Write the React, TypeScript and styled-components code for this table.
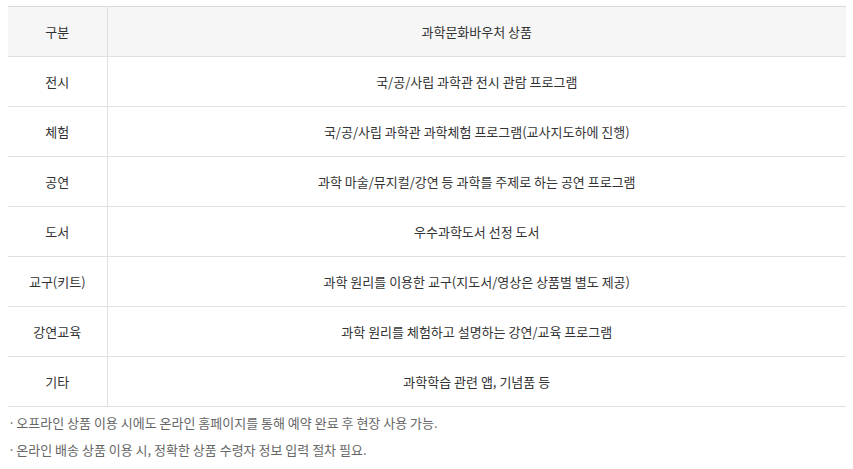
import styled, { createGlobalStyle } from "styled-components";

const GlobalStyle = createGlobalStyle`
  html, body {
    margin: 0;
    padding: 0;
    background: #fff;
  }
  body {
    font-family: "Noto Sans CJK KR", "Noto Sans", sans-serif;
    color: #333;
  }
`;

const Wrapper = styled.div`
  padding: 6px 7px 0 8px;
`;

const Table = styled.table`
  width: 100%;
  border-collapse: collapse;
  table-layout: fixed;
  border-top: 1px solid #d9d9d9;
  font-size: 13px;
  color: #333;
`;

const HeadCell = styled.th<{ $first?: boolean }>`
  height: 49px;
  padding: 0;
  font-weight: 400;
  background-color: #f6f6f6;
  border-bottom: 1px solid #e0e0e0;
  border-left: ${(props) => (props.$first ? "none" : "1px solid #e0e0e0")};
  text-align: center;
  vertical-align: middle;
`;

const Cell = styled.td<{ $first?: boolean }>`
  height: 49px;
  padding: 0;
  border-bottom: 1px solid #e0e0e0;
  border-left: ${(props) => (props.$first ? "none" : "1px solid #e0e0e0")};
  text-align: center;
  vertical-align: middle;
`;

const NoteList = styled.ul`
  list-style: none;
  margin: 2px 0 0;
  padding: 0;
`;

const Note = styled.li`
  font-size: 13px;
  line-height: 27px;
  color: #666;

  &::before {
    content: "·";
    margin-right: 1px;
  }
`;

const rows = [
  { type: "전시", product: "국/공/사립 과학관 전시 관람 프로그램" },
  { type: "체험", product: "국/공/사립 과학관 과학체험 프로그램(교사지도하에 진행)" },
  { type: "공연", product: "과학 마술/뮤지컬/강연 등 과학를 주제로 하는 공연 프로그램" },
  { type: "도서", product: "우수과학도서 선정 도서" },
  { type: "교구(키트)", product: "과학 원리를 이용한 교구(지도서/영상은 상품별 별도 제공)" },
  { type: "강연교육", product: "과학 원리를 체험하고 설명하는 강연/교육 프로그램" },
  { type: "기타", product: "과학학습 관련 앱, 기념품 등" },
];

const notes = [
  "오프라인 상품 이용 시에도 온라인 홈페이지를 통해 예약 완료 후 현장 사용 가능.",
  "온라인 배송 상품 이용 시, 정확한 상품 수령자 정보 입력 절차 필요.",
];

const App = () => {
  return (
    <>
      <GlobalStyle />
      <Wrapper>
        <Table>
          <colgroup>
            <col style={{ width: "99px" }} />
            <col />
          </colgroup>
          <thead>
            <tr>
              <HeadCell $first>구분</HeadCell>
              <HeadCell>과학문화바우처 상품</HeadCell>
            </tr>
          </thead>
          <tbody>
            {rows.map((row, index) => {
              return (
                <tr key={index}>
                  <Cell $first>{row.type}</Cell>
                  <Cell>{row.product}</Cell>
                </tr>
              );
            })}
          </tbody>
        </Table>
        <NoteList>
          {notes.map((note, index) => {
            return <Note key={index}>{note}</Note>;
          })}
        </NoteList>
      </Wrapper>
    </>
  );
};

export default App;
